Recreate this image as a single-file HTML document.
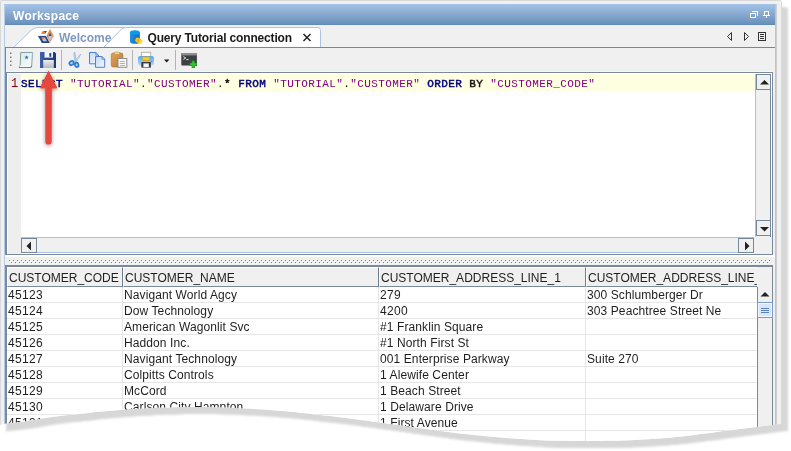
<!DOCTYPE html>
<html lang="en">
<head>
<meta charset="utf-8">
<title>Workspace - Query Tutorial connection</title>
<style>
html,body{margin:0;padding:0;background:#fff;}
body{width:791px;height:451px;overflow:hidden;position:relative;font-family:"Liberation Sans",Arial,sans-serif;font-size:12px;color:#222;}
.abs{position:absolute;}
#shadow{position:absolute;left:0;top:0;width:791px;height:451px;filter:drop-shadow(6px 7px 1.3px rgba(0,0,0,0.155));}
#paper{position:absolute;left:0;top:0;width:782px;height:451px;background:#f0f0f0;
 clip-path:path('M0,2 Q0,0 2,0 L779,0 Q782,0 782,3 L782,423.9 L781,424.0 L774,424.8 L768,425.4 L762,426.2 L756,426.9 L750,427.7 L744,428.6 L738,429.3 L732,430.0 L726,430.6 L720,431.6 L714,432.6 L708,433.2 L702,433.8 L696,434.8 L690,435.6 L684,436.2 L678,436.8 L672,437.4 L666,437.9 L660,438.4 L654,438.8 L648,439.2 L642,439.6 L636,439.9 L630,440.3 L624,440.6 L618,440.7 L612,440.8 L606,440.8 L600,440.9 L594,440.9 L588,441.0 L582,441.0 L576,440.9 L570,440.9 L564,440.8 L558,440.8 L552,440.7 L546,440.5 L540,440.2 L534,439.8 L528,439.4 L522,439.1 L516,438.7 L510,438.2 L504,437.7 L498,437.2 L492,436.7 L486,436.2 L480,435.6 L474,435.0 L468,434.3 L462,433.7 L456,432.9 L450,432.2 L444,431.4 L438,430.6 L432,429.8 L426,429.0 L420,428.2 L414,427.3 L408,426.5 L402,425.6 L396,424.8 L390,424.0 L384,423.1 L378,422.3 L372,421.4 L366,420.6 L360,419.9 L354,419.1 L348,418.3 L342,417.6 L336,416.8 L330,416.1 L324,415.4 L318,414.7 L312,414.0 L306,413.3 L300,412.7 L294,412.1 L288,411.4 L282,410.9 L276,410.4 L270,410.0 L264,409.6 L258,409.2 L252,408.8 L246,408.5 L240,408.2 L234,407.9 L228,407.6 L222,407.4 L216,407.2 L210,407.1 L204,407.0 L198,406.9 L192,406.9 L186,406.9 L180,407.0 L174,407.2 L168,407.4 L162,407.6 L156,407.8 L150,408.1 L144,408.4 L138,408.7 L132,409.1 L126,409.5 L120,409.9 L114,410.4 L108,410.9 L102,411.4 L96,412.0 L90,412.7 L84,413.4 L78,414.0 L72,414.7 L66,415.3 L60,416.0 L54,416.8 L48,417.6 L42,418.6 L36,419.6 L30,420.7 L24,421.5 L18,422.3 L12,423.0 L6,423.6 L0,424.8 Z');}
#edgeL{left:0;top:0;width:1px;height:451px;background:#d9d9d9;}
#edgeR{left:781px;top:0;width:1px;height:451px;background:#d9d9d9;}
#edgeT{left:0;top:0;width:782px;height:1px;background:#d9d9d9;}

/* title bar */
#title{left:5px;top:4px;width:770px;height:21px;background:linear-gradient(#a4c4ea 0%,#86a7cd 52%,#6a92be 93%,#5e87b6 100%);}
#title span{letter-spacing:0.27px;position:absolute;left:8px;top:5px;color:#fff;font-weight:bold;font-size:12px;line-height:14px;}

/* panel borders */
.pb{background:#9db8d9;}
.line{background:#7a8a9c;}

/* tabs */
.tabtxt{position:absolute;font-weight:bold;font-size:12px;line-height:14px;white-space:nowrap;}

/* toolbar */
.sep{position:absolute;top:50px;width:1px;height:20px;background:#b4b4b4;}

/* editor */
#editor{left:7px;top:73px;width:765px;height:181px;background:#fff;}
.mono{font-family:"Liberation Mono","Courier New",monospace;font-size:11px;letter-spacing:0.4px;white-space:pre;}
.kw{color:#000080;font-weight:normal;-webkit-text-stroke:0.45px #000080;}
.kb{color:#111;-webkit-text-stroke:0.45px #111;}
.str{color:#800080;}

/* scrollbars */
.sbtn{position:absolute;box-sizing:border-box;width:16px;height:16px;background:#f0f0f0;border:1px solid #74879c;}
.track{position:absolute;background:#f0f0f0;}

/* table */
#tbl{left:7px;top:267px;width:750px;height:184px;background:#fff;overflow:hidden;}
.hd{position:absolute;top:0;height:20px;box-sizing:border-box;background:#f0f0f0;border-right:1px solid #6f7d92;border-bottom:1px solid #7a8a9c;border-top:1px solid #fff;border-left:1px solid #fff;font-size:12px;line-height:20px;padding-left:1px;white-space:nowrap;overflow:hidden;color:#1e1e1e;}
.row{position:absolute;left:0;width:750px;height:16px;box-sizing:border-box;border-bottom:1px solid #e6e6e6;}
.row span{letter-spacing:0.1px;position:absolute;top:0;height:16px;line-height:17px;padding-left:1px;white-space:nowrap;overflow:hidden;box-sizing:border-box;border-right:1px solid #e6e6e6;color:#1e1e1e;}
.c1{left:0;width:116px;letter-spacing:0.33px !important;}
.c2{left:116px;width:256px;}
.c3{left:372px;width:207px;}
.c4{left:579px;width:171px;border-right:none !important;}
</style>
</head>
<body>
<div id="shadow">
<div id="paper">
  <div class="abs" id="edgeL"></div>
  <div class="abs" id="edgeT"></div>
  <div class="abs" id="edgeR"></div>

  <!-- title bar -->
  <div class="abs" id="title"><span>Workspace</span>
    <svg class="abs" style="left:739px;top:0" width="31" height="21" viewBox="744 4 31 21" shape-rendering="crispEdges">
      <g fill="none" stroke="#fff" stroke-width="1">
        <rect x="750.5" y="13.5" width="5" height="4"/>
        <path d="M752 11.5 H757.5 V16"/>
        <rect x="764.5" y="11.5" width="4" height="4"/>
        <path d="M763 15.5 H770 M766.5 16 V18"/>
      </g>
    </svg>
  </div>

  <!-- panel side borders -->
  <div class="abs" style="left:4px;top:4px;width:1px;height:447px;background:#b6cdea"></div>
  <div class="abs line" style="left:5px;top:47px;width:1px;height:208px"></div>
  <div class="abs" style="left:775px;top:4px;width:1px;height:447px;background:#adc6e6"></div>
  <div class="abs" style="left:776px;top:4px;width:1px;height:447px;background:#cfcfcf"></div>

  <!-- tab strip -->
  <svg class="abs" style="left:0;top:25px" width="782" height="24" viewBox="0 25 782 24">
    <!-- Welcome tab -->
    <path d="M13.5 47.5 L31.5 30 Q34 27.5 38 27.5 L124 27.5 L104 47.5 Z" fill="#fff" stroke="#a9c4e4" stroke-width="1"/>
    <!-- Selected tab -->
    <path d="M103.5 47.5 L120.5 30 Q123 27.5 127 27.5 L317.5 27.5 Q320.5 27.5 320.5 30.5 L320.5 47.5 Z" fill="#fff" stroke="#a9c4e4" stroke-width="1"/>
    <rect x="6" y="47" width="769" height="1" fill="#74879c"/>
    <!-- nav arrows -->
    <g fill="none" stroke="#333" stroke-width="1">
      <path d="M731.5 32.5 L727.5 36.5 L731.5 40.5 Z"/>
      <path d="M744.5 32.5 L748.5 36.5 L744.5 40.5 Z"/>
      <rect x="758.5" y="32.5" width="7" height="8"/>
      <path d="M760 34.5h4M760 36.5h4M760 38.5h4"/>
    </g>
    <path d="M305.5 35.5 l7 7 M312.5 35.5 l-7 7" transform="translate(-2,-1.5)" stroke="#222" stroke-width="1.5" fill="none"/>
  </svg>
  <span class="tabtxt" style="left:59px;top:31px;color:#8199be;width:52px;overflow:hidden">Welcome</span>
  <span class="tabtxt" style="left:147.5px;top:31px;color:#1a1a1a;letter-spacing:-0.16px">Query Tutorial connection</span>

  <!-- tab icons -->
  <svg class="abs" style="left:36px;top:28px" width="110" height="18" viewBox="36 28 110 18">
    <defs>
      <linearGradient id="dbg" x1="0" y1="0" x2="1" y2="0"><stop offset="0" stop-color="#2a8fdc"/><stop offset="0.6" stop-color="#1b76c0"/><stop offset="1" stop-color="#1a66a8"/></linearGradient>
      <linearGradient id="org" x1="0" y1="0" x2="1" y2="1"><stop offset="0" stop-color="#d9772a"/><stop offset="1" stop-color="#efb886"/></linearGradient>
    </defs>
    <!-- welcome logo -->
    <path d="M38 35.9 L46 35.9 L49.9 42.9 L41.9 42.9 Z" fill="#2a4683"/>
    <path d="M41.2 37.6 L45 37.6 L46.9 41.2 L43.2 41.2 Z" fill="#b8c4ea"/>
    <path d="M41.4 37.6 L44.2 37.6 L43 40 Z" fill="#e07a28"/>
    <path d="M38.2 36 L46 36 L45.6 35.2 L38.8 35.2 Z" fill="#e9edf6"/>
    <path d="M50 29 L54 36 L50 42.6 L46.4 36 Z" fill="url(#org)"/>
    <path d="M50 33 L52 37 L50 40.6 L48.2 37 Z" fill="#b9c3ec"/>
    <path d="M50 32.6 L51.6 36 L48.5 36 Z" fill="#34508f"/>
    <path d="M42.6 31 L46.8 31 L45.2 34 L41 34 Z" fill="#e58a3c"/>
    <path d="M44 31 L46.8 31 L45.6 33.2 Z" fill="#33508f"/>
    <!-- db icon -->
    <path d="M130 32.6 L130 41.4 A4.9 2.3 0 0 0 139.8 41.4 L139.8 32.6 Z" fill="url(#dbg)"/>
    <ellipse cx="134.9" cy="32.6" rx="4.9" ry="2.4" fill="#0d9be6"/>
    <g transform="rotate(28 138.5 40.5)">
      <rect x="135.2" y="38.2" width="6.4" height="4.8" rx="2" fill="#f6c21c"/>
      <ellipse cx="141.2" cy="40.6" rx="1.5" ry="2.4" fill="#fbd94a"/>
      <path d="M138.4 38.3 v4.6" stroke="#e0a010" stroke-width="0.8"/>
    </g>
  </svg>

  <!-- toolbar -->
  <div class="sep" style="left:61px"></div>
  <div class="sep" style="left:132px"></div>
  <div class="sep" style="left:175px"></div>
  <svg class="abs" style="left:6px;top:48px" width="200" height="24" viewBox="6 48 200 24">
    <defs>
      <linearGradient id="flp" x1="0" y1="0" x2="1" y2="0"><stop offset="0" stop-color="#4061aa"/><stop offset="0.45" stop-color="#2c4a8e"/><stop offset="1" stop-color="#1e3876"/></linearGradient>
      <linearGradient id="lbl" x1="0" y1="0" x2="0" y2="1"><stop offset="0" stop-color="#ececec"/><stop offset="1" stop-color="#b9b9b9"/></linearGradient>
      <linearGradient id="pg" x1="0" y1="0" x2="1" y2="1"><stop offset="0" stop-color="#c2d8f8"/><stop offset="1" stop-color="#f6faff"/></linearGradient>
      <linearGradient id="clip" x1="0" y1="0" x2="1" y2="1"><stop offset="0" stop-color="#e0a45c"/><stop offset="1" stop-color="#b97a34"/></linearGradient>
      <linearGradient id="prn" x1="0" y1="0" x2="0" y2="1"><stop offset="0" stop-color="#4ea8f2"/><stop offset="1" stop-color="#b4dcfa"/></linearGradient>
      <linearGradient id="scr" x1="0" y1="0" x2="1" y2="1"><stop offset="0" stop-color="#d6e9e9"/><stop offset="1" stop-color="#fcfefe"/></linearGradient>
    </defs>
    <!-- grip -->
    <g fill="#7c7c7c"><rect x="10" y="52.5" width="1.5" height="1.5"/><rect x="10" y="56.5" width="1.5" height="1.5"/><rect x="10" y="60.5" width="1.5" height="1.5"/><rect x="10" y="64.5" width="1.5" height="1.5"/></g>
    <g fill="#fff"><rect x="11" y="54" width="1" height="1"/><rect x="11" y="58" width="1" height="1"/><rect x="11" y="62" width="1" height="1"/><rect x="11" y="66" width="1" height="1"/></g>
    <!-- new script -->
    <path d="M20.7 52.5 L32.6 52.5 Q33.5 53.4 32.4 54.2 L31.7 65.6 Q31.7 67.4 29.9 67.5 L19.2 67.5 Q19 66 20.2 65.4 Z" fill="url(#scr)" stroke="#879f9f" stroke-width="1"/>
    <path d="M19.8 66.3 L30.4 66.3" stroke="#fff" stroke-width="0.9"/>
    <path d="M19.2 67.5 L30 67.5 Q31.6 67.3 31.7 65.8" fill="none" stroke="#6c8484" stroke-width="1.1"/>
    <path d="M26.6 55.2 l0.65 1.4 1.55 0.15 -1.15 1.05 0.3 1.55 -1.35 -0.8 -1.35 0.8 0.3 -1.55 -1.15 -1.05 1.55 -0.15z" fill="#4a78b8"/>
    <!-- save -->
    <path d="M40 52 L54.6 52 L56 53.4 L56 68 L40 68 Z" fill="url(#flp)"/>
    <rect x="44.5" y="52" width="8.5" height="5.6" fill="#f4f6fb"/>
    <rect x="49.3" y="53" width="2" height="3.8" fill="#2a4a90"/>
    <rect x="43.2" y="60" width="10.6" height="8" fill="url(#lbl)"/>
    <!-- scissors -->
    <path d="M74.7 52 L76.3 61.6 L75 61.9 L73.9 53.6 Z" fill="#dfe8f4" stroke="#7c9dcb" stroke-width="0.6"/>
    <path d="M80.9 54.3 L76.1 62 L75 61.3 L79.5 55 Z" fill="#e8eef7" stroke="#86a5d0" stroke-width="0.6"/>
    <ellipse cx="71.6" cy="63.1" rx="2.3" ry="1.9" fill="#b4d3f2" stroke="#2b7bd0" stroke-width="1.7" transform="rotate(-35 71.6 63.1)"/>
    <ellipse cx="76.7" cy="64.9" rx="1.8" ry="2.2" fill="#b4d3f2" stroke="#2b7bd0" stroke-width="1.7" transform="rotate(-15 76.7 64.9)"/>
    <!-- copy -->
    <path d="M89.5 52.5 L95.8 52.5 L98.5 55.2 L98.5 63.8 L89.5 63.8 Z" fill="url(#pg)" stroke="#5080d6" stroke-width="1"/>
    <path d="M95.8 52.5 L95.8 55.2 L98.5 55.2" fill="none" stroke="#4a78d2" stroke-width="0.8"/>
    <path d="M95.5 56.5 L102 56.5 L104.7 59.2 L104.7 67.3 L95.5 67.3 Z" fill="url(#pg)" stroke="#5080d6" stroke-width="1"/>
    <path d="M102 56.5 L102 59.2 L104.7 59.2" fill="none" stroke="#4a78d2" stroke-width="0.8"/>
    <!-- paste -->
    <rect x="111.3" y="53" width="11.6" height="14" rx="1.8" fill="url(#clip)" stroke="#a86c2a" stroke-width="0.6"/>
    <rect x="114.6" y="52" width="5" height="2.6" rx="0.8" fill="#f3d58a" stroke="#b98a3a" stroke-width="0.5"/>
    <rect x="118" y="58.5" width="8.8" height="8.8" fill="#fafafa" stroke="#8e8e8e" stroke-width="1"/>
    <path d="M119.8 61.5h5.2M119.8 63.5h5.2M119.8 65.5h5.2" stroke="#a9a9a9" stroke-width="0.9"/>
    <!-- print -->
    <rect x="141.5" y="52.3" width="9.2" height="5" fill="#fcfcfc" stroke="#a9a9a9" stroke-width="0.8"/>
    <rect x="138" y="56" width="16" height="9.4" rx="2.2" fill="url(#prn)"/>
    <rect x="142.3" y="56.9" width="7.6" height="3.4" rx="0.6" fill="#f9d423" stroke="#e2930f" stroke-width="0.8"/>
    <rect x="141.3" y="62" width="9.6" height="5.6" fill="#3c3c3c"/>
    <rect x="143.4" y="63.4" width="5.4" height="3.6" fill="#f4f4f4"/>
    <rect x="151.2" y="60.8" width="1" height="1" fill="#8a5a10"/>
    <!-- dropdown -->
    <path d="M164 59.4 L169.4 59.4 L166.7 62.4 Z" fill="#1a1a1a"/>
    <!-- console -->
    <rect x="181.3" y="53" width="15.6" height="12.6" rx="0.8" fill="#3f3f46"/>
    <rect x="181.3" y="53" width="15.6" height="2.4" fill="#8e8e8e"/>
    <path d="M183.3 56.6 l2.4 1.4 -2.4 1.4 M186.2 59.6 h2.4" fill="none" stroke="#f0f0f0" stroke-width="0.9"/>
    <path d="M193.3 60.6 v7.4 M189.6 64.3 h7.4" stroke="#178a17" stroke-width="3.2"/>
    <path d="M193.3 61.2 v6.2 M190.2 64.3 h6.2" stroke="#35c735" stroke-width="2"/>
  </svg>

  <!-- toolbar bottom / editor top border -->
  <div class="abs" style="left:6px;top:71px;width:767px;height:1px;background:#f8f6f4"></div>
  <div class="abs line" style="left:6px;top:72px;width:767px;height:1px"></div>
  <div class="abs line" style="left:6px;top:72px;width:1px;height:183px"></div>
  <div class="abs line" style="left:772px;top:72px;width:1px;height:183px"></div>
  <div class="abs line" style="left:6px;top:254px;width:767px;height:1px"></div>

  <!-- editor -->
  <div class="abs" id="editor">
    <div class="abs" style="left:1px;top:1px;width:13px;height:180px;background:#eeeeee"></div>
    <div class="abs" style="left:14px;top:1px;width:734px;height:17px;background:#ffffe1"></div>
    <span class="abs mono" style="left:4px;top:4px;line-height:14px;color:#800000;letter-spacing:0;font-size:12px">1</span>
    <span class="abs mono" style="left:14px;top:4px;line-height:14px;color:#111"><span class="kw">SELECT</span> <span class="str">"TUTORIAL"</span>.<span class="str">"CUSTOMER"</span>.<span class="kb">*</span> <span class="kw">FROM</span> <span class="str">"TUTORIAL"</span>.<span class="str">"CUSTOMER"</span> <span class="kw">ORDER</span> <span class="kb">BY</span> <span class="str">"CUSTOMER_CODE"</span></span>
    <!-- vertical scrollbar (editor) -->
    <div class="track" style="left:748px;top:1px;width:16px;height:163px;border-left:1px solid #a9c1e2;border-right:1px solid #74879c;box-sizing:border-box"></div>
    <div class="sbtn" style="left:749px;top:1px;width:15px;height:16px"></div>
    <div class="sbtn" style="left:749px;top:147px;width:15px;height:16px"></div>
    <svg class="abs" style="left:748px;top:1px" width="16" height="163" viewBox="0 0 16 163">
      <path d="M5 10.5 L9.5 6 L14 10.5 Z" fill="#222"/>
      <path d="M5 153 L14 153 L9.5 157.5 Z" fill="#222"/>
    </svg>
    <!-- horizontal scrollbar (editor) -->
    <div class="track" style="left:14px;top:164px;width:733px;height:16px;border-top:1px solid #a9c1e2;border-bottom:1px solid #a9c1e2;box-sizing:border-box"></div>
    <div class="sbtn" style="left:14px;top:165px;width:16px;height:15px"></div>
    <div class="sbtn" style="left:731px;top:165px;width:16px;height:15px"></div>
    <svg class="abs" style="left:14px;top:164px" width="734" height="16" viewBox="0 0 734 16">
      <path d="M10 4.5 L5.5 9 L10 13.5 Z" fill="#222"/>
      <path d="M724 4.5 L728.5 9 L724 13.5 Z" fill="#222"/>
    </svg>
    <div class="abs" style="left:747px;top:164px;width:1px;height:17px;background:#f0f0f0"></div>
    <div class="abs" style="left:748px;top:164px;width:17px;height:17px;background:#f0f0f0"></div>
  </div>

  <!-- split divider -->
  <div class="abs" style="left:5px;top:255px;width:770px;height:2px;background:#fdfdfd"></div>
  <svg class="abs" style="left:5px;top:258px" width="768" height="7" viewBox="5 258 768 7" shape-rendering="crispEdges">
    <defs><pattern id="dots" x="9" y="260" width="4" height="4" patternUnits="userSpaceOnUse">
      <rect x="0" y="0" width="1" height="1" fill="#6f7f92"/><rect x="1" y="1" width="1" height="1" fill="#fff"/>
      <rect x="2" y="2" width="1" height="1" fill="#6f7f92"/><rect x="3" y="3" width="1" height="1" fill="#fff"/>
    </pattern></defs>
    <rect x="9" y="260" width="762" height="4" fill="url(#dots)"/>
  </svg>

  <!-- table frame -->
  <div class="abs line" style="left:5px;top:265px;width:768px;height:2px"></div>
  <div class="abs line" style="left:5px;top:265px;width:2px;height:186px"></div>
  <div class="abs line" style="left:772px;top:265px;width:1px;height:186px"></div>
  <div class="abs line" style="left:757px;top:287px;width:1px;height:164px"></div>

  <div class="abs" id="tbl">
    <div class="hd" style="left:0;width:116px">CUSTOMER_CODE</div>
    <div class="hd" style="left:116px;width:256px">CUSTOMER_NAME</div>
    <div class="hd" style="left:372px;width:207px">CUSTOMER_ADDRESS_LINE_1</div>
    <div class="hd" style="left:579px;width:171px;border-right:none">CUSTOMER_ADDRESS_LINE_2</div>

    <div class="row" style="top:20px"><span class="c1">45123</span><span class="c2">Navigant World Agcy</span><span class="c3" style="letter-spacing:0.33px">279</span><span class="c4">300 Schlumberger Dr</span></div>
    <div class="row" style="top:36px"><span class="c1">45124</span><span class="c2">Dow Technology</span><span class="c3" style="letter-spacing:0.33px">4200</span><span class="c4">303 Peachtree Street Ne</span></div>
    <div class="row" style="top:52px"><span class="c1">45125</span><span class="c2">American Wagonlit Svc</span><span class="c3">#1 Franklin Square</span><span class="c4"></span></div>
    <div class="row" style="top:68px"><span class="c1">45126</span><span class="c2">Haddon Inc.</span><span class="c3">#1 North First St</span><span class="c4"></span></div>
    <div class="row" style="top:84px"><span class="c1">45127</span><span class="c2">Navigant Technology</span><span class="c3">001 Enterprise Parkway</span><span class="c4">Suite 270</span></div>
    <div class="row" style="top:100px"><span class="c1">45128</span><span class="c2">Colpitts Controls</span><span class="c3">1 Alewife Center</span><span class="c4"></span></div>
    <div class="row" style="top:116px"><span class="c1">45129</span><span class="c2">McCord</span><span class="c3">1 Beach Street</span><span class="c4"></span></div>
    <div class="row" style="top:132px"><span class="c1">45130</span><span class="c2">Carlson City Hampton</span><span class="c3">1 Delaware Drive</span><span class="c4"></span></div>
    <div class="row" style="top:148px"><span class="c1">45131</span><span class="c2">Travel Center</span><span class="c3">1 First Avenue</span><span class="c4"></span></div>
    <div class="row" style="top:164px"><span class="c1">45132</span><span class="c2"></span><span class="c3"></span><span class="c4"></span></div>
  </div>

  <!-- table vertical scrollbar -->
  <div class="track" style="left:758px;top:287px;width:14px;height:164px"></div>
  <svg class="abs" style="left:757px;top:286px" width="17" height="34" viewBox="0 0 17 34">
    <path d="M3.5 10.5 L8 6 L12.5 10.5 Z" fill="#222"/>
    <rect x="0.5" y="16.5" width="15" height="15" fill="#d9e6f8" stroke="#7a9ccc"/>
    <rect x="1.5" y="17.5" width="13" height="13" fill="none" stroke="#f3f8fe"/>
    <path d="M4 22.5h8M4 24.5h8M4 26.5h8" stroke="#5b82c0" stroke-width="1"/>
  </svg>

  <!-- annotation arrow -->
  <svg class="abs" style="left:30px;top:62px" width="40" height="92" viewBox="30 62 40 92">
    <defs><filter id="ash" x="-40%" y="-10%" width="180%" height="125%"><feGaussianBlur in="SourceAlpha" stdDeviation="2.1"/><feOffset dx="0.3" dy="1.3"/><feComponentTransfer><feFuncA type="linear" slope="0.42"/></feComponentTransfer><feMerge><feMergeNode/><feMergeNode in="SourceGraphic"/></feMerge></filter></defs>
    <path d="M48.5 70.5 L57 87.3 Q57.4 88.5 56.2 88.5 L51.9 88.5 L51.7 141.4 A3.2 3.2 0 0 1 45.3 141.4 L45.2 88.5 L41 88.5 Q39.8 88.5 40.2 87.3 Z" fill="#e8473f" filter="url(#ash)"/>
  </svg>
</div>
</div>
</body>
</html>
